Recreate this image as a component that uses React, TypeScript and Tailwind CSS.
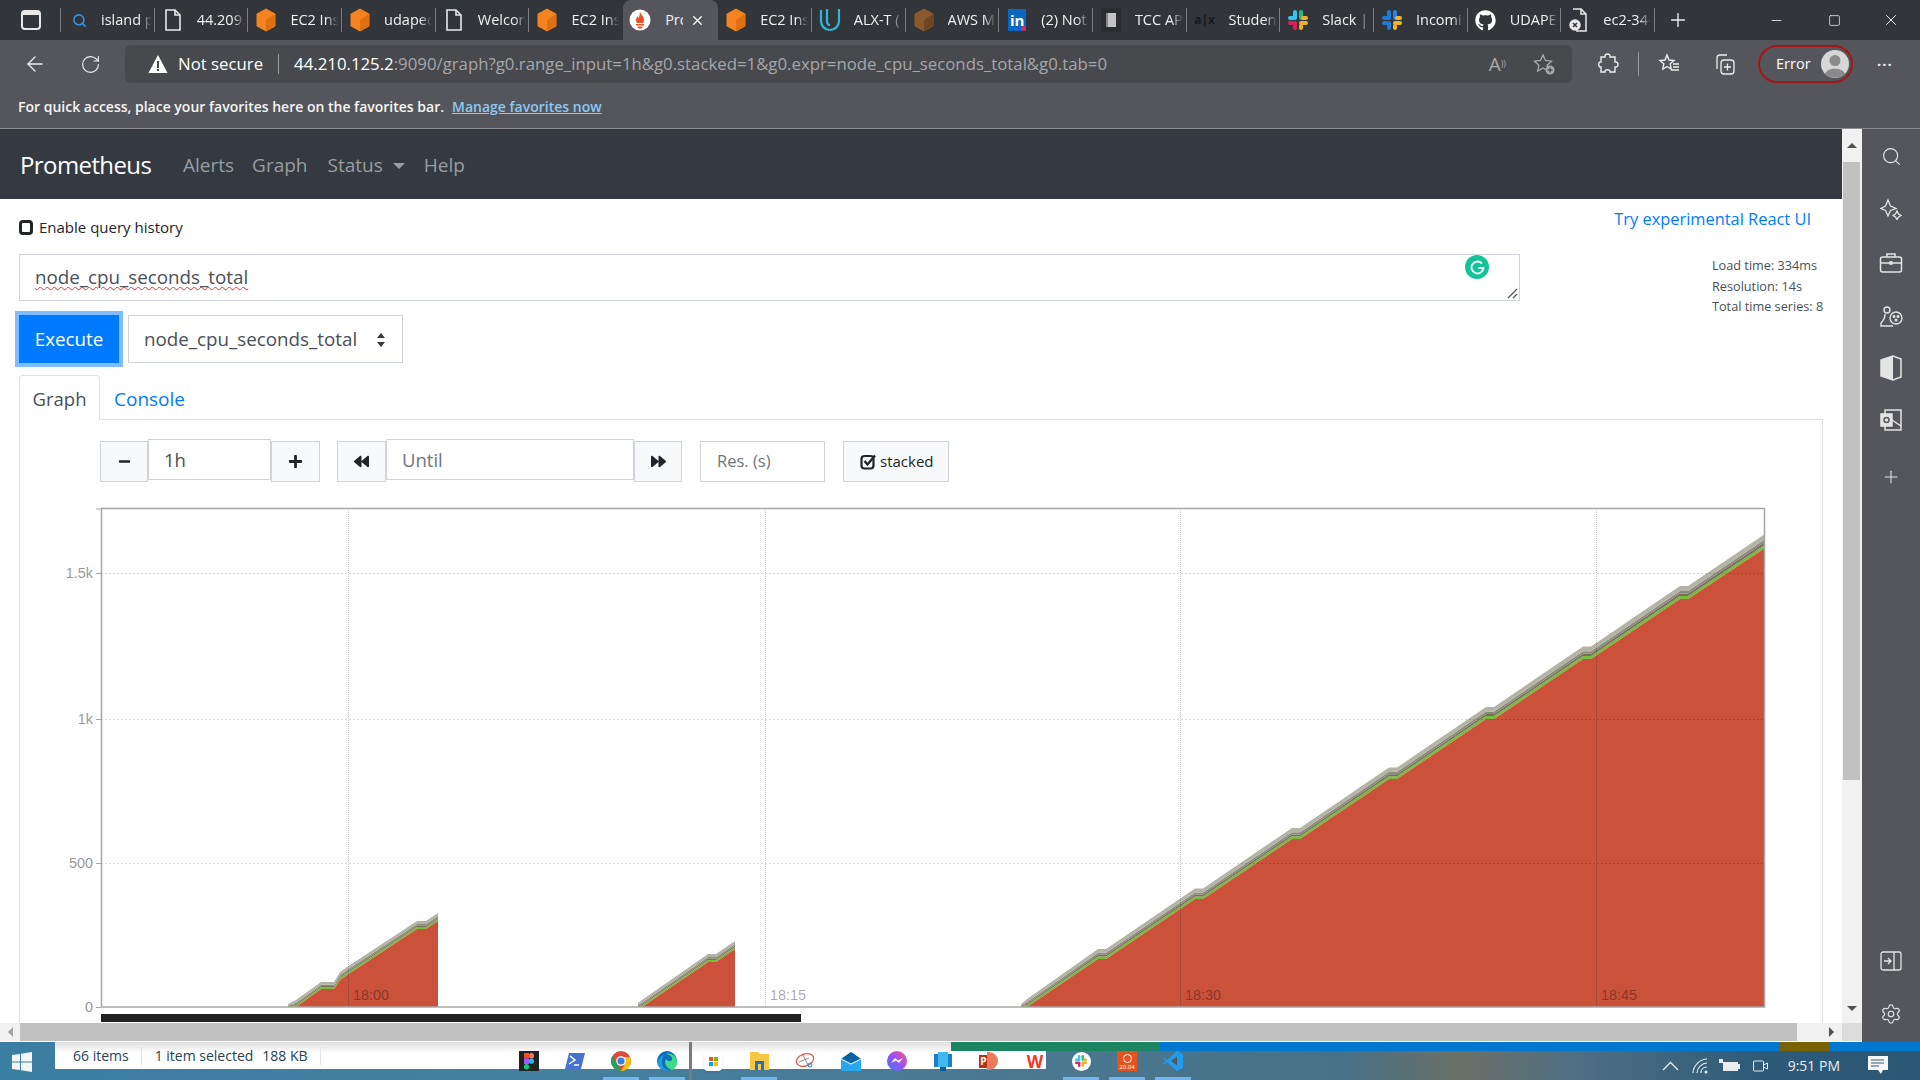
import type { ReactNode } from 'react';
import { ArrowLeft, Minus, Plus, RotateCw, Search, Settings, Square, X } from 'lucide-react';
import { FaBackward, FaForward, FaGithub, FaMinus, FaPlus } from 'react-icons/fa';

const Doc = () => (
    <svg width="20" height="24" viewBox="0 0 20 24" fill="none" stroke="#e8e8e8" strokeWidth="1.6">
        <path d="M3 2h9l5 5v15H3z" />
        <path d="M12 2v5h5" />
    </svg>
);

const Cube = ({ dark }: { dark?: boolean }) => (
    <svg width="22" height="24" viewBox="0 0 22 24">
        <path d="M11 1l9 5v12l-9 5-9-5V6z" fill={dark ? '#8a5a2c' : '#f58420'} stroke={dark ? '#8a5a2c' : '#f58420'} strokeLinejoin="round" />
        <path d="M11 12l9-6v12l-9 5z" fill={dark ? '#6e4722' : '#e06f12'} />
    </svg>
);

const PromIcon = () => (
    <svg width="22" height="22" viewBox="0 0 22 22">
        <circle cx="11" cy="11" r="10.5" fill="#fff" />
        <path d="M11 3c1 3 4 4 4 8 0 2-1 3-1 3H8s-1-1-1-3c0-2 1-3 2-4 0 1 .6 1.6 1 2 .4-2 .6-4 1-6z" fill="#e6522c" />
        <rect x="7" y="15" width="8" height="1.4" fill="#e6522c" />
        <path d="M8 17.5h6L12.5 19.5h-3z" fill="#e6522c" />
    </svg>
);

const SlackIcon = ({ mono }: { mono?: boolean }) => (
    <svg width="22" height="22" viewBox="0 0 22 22" strokeWidth="4" strokeLinecap="round">
        <path d="M8 3v6" stroke={mono ? '#1d7bd8' : '#36c5f0'} />
        <path d="M3 9h3" stroke={mono ? '#1d7bd8' : '#36c5f0'} />
        <path d="M14 3v6" stroke={mono ? '#2d7fe0' : '#2eb67d'} />
        <path d="M16 9h3" stroke={mono ? '#f0b429' : '#ecb22e'} />
        <path d="M14 14h5" stroke={mono ? '#f0b429' : '#ecb22e'} />
        <path d="M8 14v5" stroke={mono ? '#1d7bd8' : '#e01e5a'} />
        <path d="M14 17v2" stroke={mono ? '#f0b429' : '#ecb22e'} />
        <path d="M3 14h2" stroke={mono ? '#1d7bd8' : '#e01e5a'} />
    </svg>
);

const tabIcons: Record<string, ReactNode> = {
    search: <Search size={15} strokeWidth={2.5} className="text-[#3a8fe0]" />,
    doc: <Doc />,
    ec2: <Cube />,
    prom: <PromIcon />,
    udacity: (
        <svg width="22" height="26" viewBox="0 0 22 26" fill="none" stroke="#2fb5d8" strokeWidth="2.2">
            <path d="M2 3v11c0 5 4 9 9 9s9-4 9-9V2" />
            <path d="M8 2v12c0 2 1 4 3 4" />
        </svg>
    ),
    aws: <Cube dark />,
    linkedin: (
        <div className="relative flex h-[22px] w-[18px] items-center justify-center bg-[#0a66c2] text-[15px] font-bold leading-none text-white">
            in
            <span className="absolute bottom-0 right-0 h-[5px] w-[5px] rounded-full bg-[#e0245e]" />
        </div>
    ),
    tcc: (
        <div className="flex h-[24px] w-[20px] items-center justify-center bg-[#2a2e31]">
            <div className="h-[14px] w-[10px] border-l-2 border-[#888] bg-[#c4c4c4]" />
        </div>
    ),
    alx: <span className="text-[12px] font-bold text-[#16181b]">a|x</span>,
    slack: <SlackIcon />,
    slackblue: <SlackIcon mono />,
    github: <FaGithub size={21} className="text-white" />,
    doclock: (
        <svg width="20" height="26" viewBox="0 0 20 26" fill="none" stroke="#e8e8e8" strokeWidth="1.5">
            <path d="M4 2h8l5 5v17H7" />
            <path d="M12 2v5h5" />
            <circle cx="6" cy="18" r="5" fill="#e8e8e8" />
            <path d="M4 16l4 4M8 16l-4 4" stroke="#323539" />
        </svg>
    ),
};

const tabs = [
    { icon: 'search', text: 'island p' },
    { icon: 'doc', text: '44.209.' },
    { icon: 'ec2', text: 'EC2 Ins' },
    { icon: 'ec2', text: 'udapec' },
    { icon: 'doc', text: 'Welcon' },
    { icon: 'ec2', text: 'EC2 Ins' },
    { icon: 'prom', text: 'Pro', active: true },
    { icon: 'ec2', text: 'EC2 Ins' },
    { icon: 'udacity', text: 'ALX-T (' },
    { icon: 'aws', text: 'AWS M' },
    { icon: 'linkedin', text: '(2) Not' },
    { icon: 'tcc', text: 'TCC AP' },
    { icon: 'alx', text: 'Student' },
    { icon: 'slack', text: 'Slack | I' },
    { icon: 'slackblue', text: 'Incomin' },
    { icon: 'github', text: 'UDAPE' },
    { icon: 'doclock', text: 'ec2-34-' },
];

function TabStrip() {
    return (
        <div className="flex h-10 shrink-0 items-stretch bg-[#323539] text-[14.5px] text-[#f1f1f1]">
            <div className="flex w-[60px] items-center justify-center">
                <div className="ml-[1px] h-[20px] w-[20px] rounded-[4px] border-2 border-[#e8e8e8] border-t-[5px]" />
            </div>
            <div className="my-[8px] w-px bg-[#7b7d81]" />
            {tabs.map((t, i) =>
                t.active ? (
                    <div key={i} className="flex w-[95px] shrink-0 items-center rounded-t-lg bg-[#55565b] pl-[6px]">
                        <span className="flex w-[22px] justify-center">{tabIcons[t.icon]}</span>
                        <span className="ml-[14px] w-[18px] overflow-hidden whitespace-nowrap">{t.text}</span>
                        <X size={15} className="ml-[7px] text-white" />
                    </div>
                ) : (
                    <div key={i} className="flex w-[93.7px] shrink-0 items-center pl-[7px]">
                        <span className="flex w-[22px] shrink-0 justify-center">{tabIcons[t.icon]}</span>
                        <span
                            className={`${i === 0 ? 'ml-[11px] w-[51px]' : 'ml-[13px] w-[48px]'} overflow-hidden whitespace-nowrap [mask-image:linear-gradient(90deg,#000_75%,transparent)]`}
                        >
                            {t.text}
                        </span>
                        {!tabs[i + 1]?.active && <span className="ml-auto h-6 w-px bg-[#7b7d81]" />}
                    </div>
                ),
            )}
            <div className="ml-[8px] flex w-[30px] items-center justify-center">
                <Plus size={22} strokeWidth={1.5} className="text-[#eee]" />
            </div>
            <div className="ml-auto flex items-center text-[#eee]">
                <Minus size={15} strokeWidth={1.4} />
                <Square size={13} strokeWidth={1.4} className="ml-[44px]" />
                <X size={18} strokeWidth={1.3} className="ml-[41px] mr-[20px]" />
            </div>
        </div>
    );
}

function AddressBar() {
    return (
        <div className="flex h-[48px] shrink-0 items-start bg-[#55565b] pt-[5px] text-[#eee]">
            <div className="flex h-[38px] w-[125px] items-center pl-[23px]">
                <ArrowLeft size={24} strokeWidth={1.3} />
                <RotateCw size={21} strokeWidth={1.3} className="ml-[33px]" />
            </div>
            <div className="flex h-[38px] w-[1447px] items-center rounded-md bg-[#48494d] pl-[23px] text-[16.8px]">
                <svg width="20" height="20" viewBox="0 0 20 20">
                    <path d="M10 1l9.5 18H.5z" fill="#fff" />
                    <rect x="9" y="7" width="2" height="7" fill="#48494d" />
                    <rect x="9" y="15" width="2" height="2" fill="#48494d" />
                </svg>
                <span className="ml-[10px] text-white">Not secure</span>
                <span className="ml-[15px] h-5 w-px bg-[#9a9b9e]" />
                <span className="ml-[15px] whitespace-nowrap text-white">
                    44.210.125.2
                    <span className="text-[#a5a6a9]">:9090/graph?g0.range_input=1h&amp;g0.stacked=1&amp;g0.expr=node_cpu_seconds_total&amp;g0.tab=0</span>
                </span>
                <div className="ml-auto flex items-center text-[#aaa]">
                    <span className="text-[19px]">A</span>
                    <span className="text-[9px]">))</span>
                    <svg className="ml-[26px] mr-[16px]" width="24" height="24" viewBox="0 0 24 24" fill="none" stroke="#aaa" strokeWidth="1.3">
                        <path d="M11 3l2.5 5.5 6 .7-4.4 4 1.2 5.8L11 16l-5.3 3 1.2-5.800-4.400-4 6-.7z" />
                        <circle cx="18" cy="18" r="4.5" fill="#aaa" stroke="none" />
                        <path d="M18 15.5v5M15.5 18h5" stroke="#48494d" />
                    </svg>
                </div>
            </div>
            <div className="flex h-[38px] flex-1 items-center">
                <svg className="ml-[25px]" width="22" height="24" viewBox="0 0 22 24" fill="none" stroke="#eee" strokeWidth="1.4">
                    <path d="M8 5c-1-4 6-4 5 0h5v5c4-1 4 6 0 5v5h-5c1-3-6-3-5 0H4v-5c-3 1-3-6 0-5V5z" />
                </svg>
                <span className="ml-[19px] h-6 w-px bg-[#9a9b9e]" />
                <svg className="ml-[19px]" width="22" height="22" viewBox="0 0 22 22" fill="none" stroke="#eee" strokeWidth="1.4">
                    <path d="M9 2l2 5 5 .5-3.800 3.300 1 5.200L9 13.500 4.800 16l1-5.200L2 7.500 7 7zM15 11h6M15 14h6M13 17h8" />
                </svg>
                <svg className="ml-[33px]" width="24" height="24" viewBox="0 0 24 24" fill="none" stroke="#eee" strokeWidth="1.3">
                    <rect x="8" y="8" width="13" height="14" rx="3" />
                    <path d="M4 17V6c0-2 1-3 3-3h7M14.500 11.500v7M11 15h7" />
                </svg>
                <div className="ml-[21px] flex h-[38px] w-[95px] items-center rounded-[19px] border-2 border-[#a4161a] pl-[16px] text-[14.5px] text-white">
                    Error
                    <svg className="ml-[10px]" width="28" height="28" viewBox="0 0 28 28">
                        <circle cx="14" cy="14" r="14" fill="#d6d6d6" />
                        <circle cx="14" cy="10.500" r="5.500" fill="#8a8a8a" />
                        <path d="M4 24c2-7 18-7 20 0-5 5-15 5-20 0z" fill="#8a8a8a" />
                    </svg>
                </div>
                <span className="ml-[24px] text-[15px] font-bold leading-none tracking-[1px]">···</span>
            </div>
        </div>
    );
}

function FavoritesBar() {
    return (
        <div className="flex h-[41px] shrink-0 items-start border-b border-[#8c8d90] bg-[#55565b] pl-[18px] pt-[8px] text-[14px] font-semibold text-[#f5f5f5]">
            For quick access, place your favorites here on the favorites bar.
            <span className="ml-[8px] text-[#8cc8f5] underline">Manage favorites now</span>
        </div>
    );
}

function ChartSvg() {
    // coordinates below are page pixels, so viewBox starts at the svg's place on the page
    const xs = [348, 765, 1180, 1596];
    const ys = [
        { y: 1007, label: '0' },
        { y: 863, label: '500' },
        { y: 719, label: '1k' },
        { y: 573, label: '1.5k' },
    ];

    // red top line + thickness of the stacked series above it
    const seg1: [number, number, number][] = [
        [288, 1007, 3], [296, 1007, 7], [321, 989, 7], [334, 989, 7], [340, 980, 8], [347, 975, 8],
        [417, 929, 8], [426, 929, 8], [438, 921, 8],
    ];
    const seg2: [number, number, number][] = [
        [638, 1007, 4], [642, 1007, 7], [708, 962, 8], [716, 962, 8], [735, 949, 8],
    ];
    const seg3: [number, number, number][] = [[1021, 1007, 3], [1027, 1007, 8]];
    for (let k = 6; k >= 0; k--) {
        const x = 1680 - 97 * k;
        const y = 599 + 60 * k;
        const o = 13 - k * 0.5;
        seg3.push([x, y, o], [x + 8, y, o]);
    }
    seg3.push([1765, 548, 14]);

    const bands = [
        { from: 0.0, to: 0.24, fill: '#75bd3d' },
        { from: 0.24, to: 0.42, fill: '#776e5c' },
        { from: 0.42, to: 0.62, fill: '#8b8b79' },
        { from: 0.62, to: 1.0, fill: '#b4b4a6' },
    ];

    const renderSeg = (seg: [number, number, number][], key: string) => {
        const endX = seg[seg.length - 1][0];
        const red = `${seg[0][0]},1007 ` + seg.map((p) => `${p[0]},${p[1]}`).join(' ') + ` ${endX},1007`;
        return (
            <g key={key}>
                {bands.map((b, i) => {
                    const top = seg.map((p) => `${p[0]},${p[1] - p[2] * b.to}`);
                    const bot = [...seg].reverse().map((p) => `${p[0]},${p[1] - p[2] * b.from}`);
                    return <polygon key={i} points={[...top, ...bot].join(' ')} fill={b.fill} />;
                })}
                <polygon points={red} fill="#cb513a" />
            </g>
        );
    };

    return (
        <svg width="1710" height="505" viewBox="60 505 1710 505" className="ml-[40px] mt-[23px] block overflow-visible">
            <defs>
                <clipPath id="plot">
                    <rect x="101" y="508" width="1664" height="499" />
                </clipPath>
            </defs>
            <g clipPath="url(#plot)">
                {renderSeg(seg1, 'a')}
                {renderSeg(seg2, 'b')}
                {renderSeg(seg3, 'c')}
            </g>
            {xs.map((x) => (
                <line key={x} x1={x + 0.5} x2={x + 0.5} y1="508" y2="1007" stroke="#000" strokeOpacity="0.22" strokeDasharray="1 1" />
            ))}
            {ys.slice(1).map((t) => (
                <line key={t.y} x1="101" x2="1765" y1={t.y + 0.5} y2={t.y + 0.5} stroke="#000" strokeOpacity="0.16" strokeDasharray="2 2" />
            ))}
            <rect x="101.500" y="508.500" width="1663" height="498.500" fill="none" stroke="#a6a6a6" strokeWidth="1.500" />
            {ys.map((t) => (
                <g key={t.label}>
                    <line x1="96" x2="101" y1={t.y + 0.5} y2={t.y + 0.5} stroke="#a6a6a6" />
                    <text x="93" y={t.y + 5} textAnchor="end" fontSize="14.400" fontFamily="'Liberation Sans', sans-serif" fill="#9a9a9a">
                        {t.label}
                    </text>
                </g>
            ))}
            <line x1="96" x2="101" y1="509" y2="509" stroke="#a6a6a6" />
            {['18:00', '18:15', '18:30', '18:45'].map((l, i) => (
                <text key={l} x={xs[i] + 5} y="1000" fontSize="14.400" fontFamily="'Liberation Sans', sans-serif" fill="#000" fillOpacity="0.35">
                    {l}
                </text>
            ))}
        </svg>
    );
}

function PrometheusPage() {
    return (
        <div className="flex h-[894px] w-[1842px] shrink-0 flex-col overflow-hidden bg-white">
            <nav className="flex h-[70px] shrink-0 items-center bg-[#343a40] pl-[20px] pt-[2px] text-[19px] text-[#9a9da0]">
                <span className="w-[132px] text-[24px] tracking-[-0.6px] text-white">Prometheus</span>
                <span className="ml-[31px]">Alerts</span>
                <span className="ml-[18px]">Graph</span>
                <span className="ml-[20px]">Status</span>
                <span className="ml-[10px] mt-[1px] h-0 w-0 border-x-[6px] border-t-[6px] border-x-transparent border-t-[#9a9da0]" />
                <span className="ml-[19px]">Help</span>
            </nav>

            <div className="px-[19px]">
                <div className="flex h-[55px] justify-between">
                    <label className="mt-[18px] flex h-5 items-center text-[15px] text-[#212529]">
                        <span className="h-[15px] w-[14px] rounded-[4px] border-[3px] border-[#212529]" />
                        <span className="ml-[6px]">Enable query history</span>
                    </label>
                    <a className="mr-[12px] mt-[7px] text-[16.4px] leading-[26px] text-[#007bff]">Try experimental React UI</a>
                </div>

                <div className="flex h-[47px] items-start">
                    <div className="relative flex h-[47px] w-[1501px] items-center border border-[#ced4da] pl-[15px] text-[18.8px] text-[#495057]">
                        <span className="underline decoration-red-500 decoration-wavy decoration-1 underline-offset-2">node_cpu_seconds_total</span>
                        <span className="absolute left-[1445px] top-[0px] flex h-6 w-6 items-center justify-center rounded-full bg-[#15c39a]">
                            <svg width="15" height="15" viewBox="0 0 15 15" fill="none" stroke="#fff" strokeWidth="1.800">
                                <path d="M12 3.500A6 6 0 1 0 13.500 8H8.500" />
                            </svg>
                        </span>
                        <svg className="absolute bottom-[1px] right-[1px]" width="11" height="11" viewBox="0 0 11 11" stroke="#555" strokeWidth="1.300">
                            <path d="M1 10l9-9M6 10l4-4" />
                        </svg>
                    </div>
                    <div className="ml-auto w-[111px] whitespace-nowrap pt-[1px] text-[12.7px] leading-[20.500px] text-[#495057]">
                        <div>Load time: 334ms</div>
                        <div>Resolution: 14s</div>
                        <div>Total time series: 8</div>
                    </div>
                </div>

                <div className="mt-[14px] flex h-[48px] items-stretch">
                    <button className="flex w-[100px] items-center justify-center bg-[#007bff] pt-[1px] text-[18.8px] text-white ring-4 ring-[#80bdff]">Execute</button>
                    <div className="ml-[9px] flex w-[275px] items-center border border-[#ced4da] pl-[15px] pt-[1px] text-[18.8px] text-[#495057]">
                        node_cpu_seconds_total
                        <svg className="ml-[19px]" width="10" height="16" viewBox="0 0 10 16" fill="#343a40">
                            <path d="M5 1l4 5H1zM5 15l4-5H1z" />
                        </svg>
                    </div>
                </div>

                <div className="mt-[12px] flex h-[45px] items-stretch">
                    <div className="flex w-[81px] items-center justify-center rounded-t border border-b-0 border-[#dee2e6] pt-[2px] text-[18.5px] text-[#495057]">Graph</div>
                    <div className="flex flex-1 items-center border-b border-[#dee2e6] pl-[14px] pt-[4px] text-[19px] text-[#007bff]">Console</div>
                </div>

                <div className="h-[640px] border-x border-[#dee2e6] pt-[19px]">
                    <div className="ml-[80px] flex h-[43px] items-start">
                        <div className="mt-[2px] flex h-[41px] w-[48px] items-center justify-center border border-[#ced4da] bg-[#f8f9fa] text-[#212529]">
                            <FaMinus size={13} />
                        </div>
                        <div className="flex h-[41px] w-[123px] items-center border border-[#ced4da] pl-[15px] pt-[1px] text-[18.5px] text-[#495057]">1h</div>
                        <div className="mt-[2px] flex h-[41px] w-[49px] items-center justify-center border border-[#ced4da] bg-[#f8f9fa] text-[#212529]">
                            <FaPlus size={15} />
                        </div>
                        <div className="ml-[17px] mt-[2px] flex h-[41px] w-[49px] items-center justify-center border border-[#ced4da] bg-[#f8f9fa] text-[#212529]">
                            <FaBackward size={15} />
                        </div>
                        <div className="flex h-[41px] w-[248px] items-center border border-[#ced4da] pl-[15px] pt-[1px] text-[18.5px] text-[#6c757d]">Until</div>
                        <div className="mt-[2px] flex h-[41px] w-[48px] items-center justify-center border border-[#ced4da] bg-[#f8f9fa] text-[#212529]">
                            <FaForward size={15} />
                        </div>
                        <div className="ml-[18px] mt-[2px] flex h-[41px] w-[125px] items-center border border-[#ced4da] pl-[16px] text-[16.500px] text-[#6c757d]">Res. (s)</div>
                        <div className="ml-[18px] mt-[2px] flex h-[41px] w-[106px] items-center border border-[#ced4da] bg-[#f8f9fa] pl-[16px] text-[15px] text-[#212529]">
                            <svg width="17" height="17" viewBox="0 0 17 17" fill="none" stroke="#212529">
                                <rect x="1.500" y="3" width="12" height="12.500" rx="3" strokeWidth="2.200" />
                                <path d="M4.500 8l3 3.500L15 2.500" strokeWidth="2.400" />
                            </svg>
                            <span className="ml-[3px]">stacked</span>
                        </div>
                    </div>
                    <ChartSvg />
                    <div className="ml-[81px] mt-[4px] h-[8px] w-[700px] bg-[#212121]" />
                </div>
            </div>
        </div>
    );
}

function Triangle({ dir }: { dir: 'up' | 'down' | 'left' | 'right' }) {
    const cls = {
        up: 'border-x-[5px] border-b-[5px] border-x-transparent border-b-[#505050]',
        down: 'border-x-[5px] border-t-[5px] border-x-transparent border-t-[#505050]',
        left: 'border-y-[5px] border-r-[5px] border-y-transparent border-r-[#a3a3a3]',
        right: 'border-y-[5px] border-l-[5px] border-y-transparent border-l-[#505050]',
    }[dir];
    return <span className={`h-0 w-0 ${cls}`} />;
}

function Sidebar() {
    const stroke = '#e4e4e4';
    return (
        <div className="flex w-[58px] shrink-0 flex-col items-center bg-[#55565b]">
            <Search size={21} strokeWidth={1.3} color={stroke} className="mt-[17px]" />
            <svg className="mt-[31px]" width="22" height="22" viewBox="0 0 22 22" fill="none" stroke={stroke} strokeWidth="1.300">
                <path d="M8 2l2.500 6L16 10.500l-5.500 2L8 18l-2.500-5.500L1 10.500 5.500 8zM17 13l1.500 3 2.500 1.500-2.500 1.500-1.500 2.500-1.500-2.500-2.500-1.500 2.500-1.500z" />
            </svg>
            <svg className="mt-[32px]" width="24" height="22" viewBox="0 0 24 22" fill="none" stroke={stroke} strokeWidth="1.500">
                <rect x="1.500" y="5" width="21" height="15" rx="2" />
                <path d="M8 5V2h8v3M1.500 11h21" />
                <rect x="11" y="10" width="2" height="2" fill={stroke} />
            </svg>
            <svg className="mt-[30px]" width="24" height="24" viewBox="0 0 24 24" fill="none" stroke={stroke} strokeWidth="1.400">
                <circle cx="8" cy="6" r="3" />
                <path d="M6 10c0 4-2 7-4 9v3h12" />
                <circle cx="17" cy="14" r="6" />
                <circle cx="15" cy="12.500" r=".8" fill={stroke} />
                <circle cx="19" cy="12.500" r=".8" fill={stroke} />
                <circle cx="17" cy="16" r=".8" fill={stroke} />
            </svg>
            <svg className="mt-[27px]" width="22" height="26" viewBox="0 0 22 26">
                <path d="M1 5l12-4 8 3v18l-8 3-12-4z" fill="none" stroke={stroke} strokeWidth="1.500" />
                <path d="M1 5l12-4v24L1 21z" fill={stroke} />
            </svg>
            <svg className="mt-[28px]" width="22" height="22" viewBox="0 0 22 22" fill="none" stroke={stroke} strokeWidth="1.500">
                <rect x="5" y="1" width="16" height="20" />
                <rect x="1" y="5" width="11" height="12" fill={stroke} />
                <circle cx="6.500" cy="11" r="2.500" stroke="#55565b" />
                <path d="M12 11l9 6" />
            </svg>
            <Plus size={20} strokeWidth={1.300} color={stroke} className="mt-[36px]" />
            <svg className="mt-auto" width="22" height="22" viewBox="0 0 22 22" fill="none" stroke={stroke} strokeWidth="1.300">
                <rect x="1" y="2" width="20" height="18" rx="2" />
                <path d="M14 2v18M4 11h7M8 8l3 3-3 3" />
            </svg>
            <Settings size={22} strokeWidth={1.300} color={stroke} className="mb-[17px] mt-[31px]" />
        </div>
    );
}

const launcher: { icon: ReactNode; running?: boolean }[] = [
    {
        icon: (
            <div className="flex h-[20px] w-[20px] items-center justify-center bg-[#222]">
                <svg width="10" height="17" viewBox="0 0 10 17">
                    <rect x="0" y="0" width="5" height="5.500" fill="#f24e1e" />
                    <rect x="5" y="0" width="5" height="5.500" rx="2.500" fill="#ff7262" />
                    <rect x="0" y="5.500" width="5" height="5.500" fill="#a259ff" />
                    <circle cx="7.500" cy="8.200" r="2.600" fill="#1abcfe" />
                    <rect x="0" y="11" width="5" height="5.500" rx="2.500" fill="#0acf83" />
                </svg>
            </div>
        ),
    },
    {
        icon: (
            <svg width="20" height="16" viewBox="0 0 20 16">
                <path d="M4 0h16l-4 16H0z" fill="#4673cf" />
                <path d="M5 3l5 4-6 4M9 12h5" stroke="#fff" strokeWidth="1.500" fill="none" />
            </svg>
        ),
    },
    {
        icon: (
            <svg width="20" height="20" viewBox="0 0 20 20">
                <circle cx="10" cy="10" r="10" fill="#dd4b3e" />
                <path d="M10 20A10 10 0 0 1 1.300 5L6 13z" fill="#1fa463" />
                <path d="M10 20a10 10 0 0 0 9-14h-9l3.500 8z" fill="#f4c20d" />
                <circle cx="10" cy="10" r="4.800" fill="#fff" />
                <circle cx="10" cy="10" r="3.600" fill="#3b7ddd" />
            </svg>
        ),
        running: true,
    },
    {
        icon: (
            <svg width="20" height="20" viewBox="0 0 20 20">
                <circle cx="10" cy="10" r="10" fill="#0c6fbd" />
                <path d="M20 11C20 4 13 1 8 3 11 3 16 5 15 9c-1 2-5 1-6-1-3 5 2 10 6 11 3-1 5-4 5-8z" fill="#3ddc84" />
                <path d="M5 12c0 4 3 7 8 7-5 2-12-1-12-7 0-4 3-7 6-8-2 2-2 5-2 8z" fill="#1b9de2" />
            </svg>
        ),
        running: true,
    },
    {
        icon: (
            <div className="flex h-[19px] w-[18px] items-center justify-center rounded-sm bg-white shadow-sm">
                <div className="grid grid-cols-2 gap-px">
                    <span className="h-1 w-1 bg-[#f25022]" />
                    <span className="h-1 w-1 bg-[#7fba00]" />
                    <span className="h-1 w-1 bg-[#00a4ef]" />
                    <span className="h-1 w-1 bg-[#ffb900]" />
                </div>
            </div>
        ),
    },
    {
        icon: (
            <svg width="19" height="18" viewBox="0 0 19 18">
                <path d="M0 0h8l2 2h9v16H0z" fill="#f6c644" />
                <rect x="5" y="9" width="9" height="9" fill="#1e73be" />
                <rect x="8" y="12" width="3" height="6" fill="#f6c644" />
            </svg>
        ),
        running: true,
    },
    {
        icon: (
            <svg width="20" height="19" viewBox="0 0 20 19" fill="none">
                <ellipse cx="10" cy="8" rx="9" ry="6" stroke="#e5544b" strokeWidth="1.200" transform="rotate(-20 10 8)" />
                <path d="M4 10l10-4M8 3l6 12" stroke="#888" />
                <circle cx="15" cy="13" r="2" stroke="#2a8ad4" />
            </svg>
        ),
    },
    {
        icon: (
            <svg width="20" height="19" viewBox="0 0 20 19">
                <path d="M0 7L10 0l10 7v12H0z" fill="#28a8ea" />
                <path d="M0 7L10 0l10 7-10 5z" fill="#0b62a5" />
                <path d="M0 7l10 5 10-5" stroke="#fff" fill="none" />
            </svg>
        ),
    },
    {
        icon: (
            <svg width="20" height="20" viewBox="0 0 20 20">
                <defs>
                    <linearGradient id="msgr" x1="0" y1="1" x2="1" y2="0">
                        <stop offset="0" stopColor="#3a7bf0" />
                        <stop offset=".55" stopColor="#a24ff0" />
                        <stop offset="1" stopColor="#f2607a" />
                    </linearGradient>
                </defs>
                <circle cx="10" cy="10" r="10" fill="url(#msgr)" />
                <path d="M4 12l4-5 3 2.500L16 7l-4 5-3-2.500z" fill="#fff" />
            </svg>
        ),
    },
    {
        icon: (
            <svg width="20" height="19" viewBox="0 0 20 19">
                <rect x="1" y="2" width="18" height="13" fill="#1c7fc7" />
                <rect x="5" y="0" width="10" height="15" fill="#3ebaf0" />
                <rect x="7" y="15" width="6" height="4" fill="#0b5d9e" />
            </svg>
        ),
    },
    {
        icon: (
            <div className="flex h-[19px] w-[21px] items-center">
                <div className="flex h-[13px] w-[10px] items-center justify-center bg-[#b7321a] text-[10px] font-bold leading-none text-white">P</div>
                <div className="-ml-[2px] h-[18px] w-[11px] rounded-r-full bg-[#ec7a5c]" />
            </div>
        ),
    },
    {
        icon: (
            <div className="flex h-[18px] w-[22px] items-center justify-center text-[17px] font-bold leading-none text-[#ee3b24]">W</div>
        ),
    },
    {
        icon: (
            <div className="flex h-[19px] w-[19px] items-center justify-center rounded-full bg-white">
                <div className="scale-[.6]">
                    <SlackIcon />
                </div>
            </div>
        ),
        running: true,
    },
    {
        icon: (
            <div className="flex h-[20px] w-[20px] flex-col items-center justify-between bg-[#e2531f] text-[6px] leading-[7px] text-white">
                <span className="mt-[3px] h-[9px] w-[9px] rounded-full border-[1.500px] border-white" />
                <span>20.04</span>
            </div>
        ),
        running: true,
    },
    {
        icon: (
            <svg width="20" height="20" viewBox="0 0 20 20">
                <path d="M14 0l6 3v14l-6 3L4 11 1 13.500 0 12.500 3 10 0 7.500 1 6.500 4 9z" fill="#1f9cf0" />
                <path d="M14 5.500L8 10l6 4.500z" fill="#55565b" />
            </svg>
        ),
        running: true,
    },
];

function Taskbar() {
    return (
        <div className="relative h-[38px] shrink-0 overflow-hidden bg-[linear-gradient(90deg,#3b7ea3_0%,#44809f_30%,#4a7890_55%,#477186_70%,#6b7066_76%,#4f6f84_82%,#2d5a78_92%,#2c5774_100%)]">
            {/* file explorer status bar and the windows behind it, peeking over the wallpaper */}
            <div className="absolute left-[55px] top-0 h-[27px] w-[991px] bg-gradient-to-b from-[#dedede] to-white to-40%" />
            <div className="absolute left-[951px] top-0 flex h-[9px] w-[969px]">
                <div className="w-[209px] bg-[#1a8560]" />
                <div className="w-[619px] bg-[#0078d0]" />
                <div className="w-[50px] bg-[#7a6200]" />
                <div className="w-[91px] bg-[#0078d0]" />
            </div>

            <div className="relative flex h-full">
                <div className="flex w-[55px] items-start pl-[12px] pt-[10px]">
                    <svg width="20" height="20" viewBox="0 0 20 20" fill="#f2f6f8">
                        <path d="M0 3l8-1v7.500H0zM9 1.800L20 0v9.500H9zM0 10.500h8V18l-8-1zM9 10.500h11V20L9 18.200z" />
                    </svg>
                </div>
                <div className="flex h-[27px] w-[451px] items-center text-[14px] text-[#2a3f54]">
                    <span className="ml-[18px]">66 items</span>
                    <span className="ml-[12px] h-[18px] w-px bg-[#e3e3e3]" />
                    <span className="ml-[13px]">1 item selected</span>
                    <span className="ml-[9px]">188 KB</span>
                    <span className="ml-[12px] h-[18px] w-px bg-[#e3e3e3]" />
                </div>
                {launcher.map((l, i) => (
                    <div key={i} className="relative flex h-full w-[46px] flex-col items-center pt-[9px]">
                        <div className="flex h-[20px] items-center">{l.icon}</div>
                        {l.running && <div className="absolute bottom-0 left-[5px] right-[5px] h-[3px] bg-[#72b4ec]" />}
                        {i === 3 && <div className="absolute -right-[2px] top-0 h-full w-[3px] bg-[#777b7e]" />}
                    </div>
                ))}
                <div className="ml-auto mr-[32px] flex items-center pt-[9px] text-[14px] text-[#e8eef2]">
                    <svg width="17" height="10" viewBox="0 0 17 10" fill="none" stroke="#e8eef2" strokeWidth="1.300">
                        <path d="M1 9l7.500-7.500L16 9" />
                    </svg>
                    <svg className="ml-[13px]" width="17" height="16" viewBox="0 0 17 16" fill="none" stroke="#e8eef2" strokeWidth="1.100">
                        <path d="M1 15C1 8 8 1 15 1M5 15C5 10 10 5 15 5M9 15c0-3 2-6 6-6" />
                        <circle cx="14" cy="14" r="1.500" fill="#e8eef2" stroke="none" />
                    </svg>
                    <svg className="ml-[10px]" width="21" height="13" viewBox="0 0 21 13">
                        <rect x="0" y="0" width="4" height="4" fill="#e8eef2" />
                        <rect x="4" y="3" width="15" height="9" fill="#e8eef2" />
                        <rect x="19" y="5" width="2" height="5" fill="#e8eef2" />
                    </svg>
                    <svg className="ml-[13px]" width="15" height="16" viewBox="0 0 15 16" fill="none" stroke="#e8eef2">
                        <rect x=".5" y="3" width="10" height="10" rx="1" />
                        <path d="M10.500 7l4-2v6l-4-2" />
                    </svg>
                    <span className="ml-[20px] whitespace-nowrap">9:51 PM</span>
                    <svg className="ml-[28px]" width="20" height="20" viewBox="0 0 20 20">
                        <path d="M0 0h20v14h-5l-2 4-3-4H0z" fill="#f4f6f8" />
                        <path d="M3 4h13M3 7h13M3 10h8" stroke="#3b5a74" />
                    </svg>
                </div>
            </div>
        </div>
    );
}

export default function App() {
    return (
        <div className="flex h-[1080px] w-[1920px] flex-col overflow-hidden bg-white font-['Open_Sans',sans-serif]">
            <TabStrip />
            <AddressBar />
            <FavoritesBar />
            <div className="flex h-[913px] shrink-0">
                <div className="flex w-[1862px] shrink-0 flex-col">
                    <div className="flex h-[894px] shrink-0">
                        <PrometheusPage />
                        <div className="flex w-[20px] shrink-0 flex-col bg-[#f1f1f1]">
                            <div className="flex h-[33px] items-center justify-center">
                                <Triangle dir="up" />
                            </div>
                            <div className="ml-[1px] h-[618px] w-[17px] bg-[#c1c1c1]" />
                            <div className="mt-auto flex h-[30px] items-center justify-center">
                                <Triangle dir="down" />
                            </div>
                        </div>
                    </div>
                    <div className="flex h-[18px] shrink-0 bg-[#f1f1f1]">
                        <div className="flex w-[20px] items-center justify-center">
                            <Triangle dir="left" />
                        </div>
                        <div className="w-[1777px] bg-[#c1c1c1]" />
                        <div className="flex w-[45px] items-center justify-end pr-[8px]">
                            <Triangle dir="right" />
                        </div>
                        <div className="w-[20px] bg-[#dcdcdc]" />
                    </div>
                    <div className="h-px bg-white" />
                </div>
                <Sidebar />
            </div>
            <Taskbar />
        </div>
    );
}
